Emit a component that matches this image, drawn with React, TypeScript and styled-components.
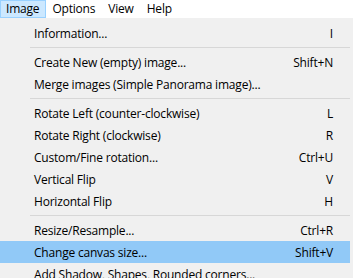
import styled, { createGlobalStyle } from "styled-components";

const GlobalStyle = createGlobalStyle`
  html, body {
    margin: 0;
    padding: 0;
    overflow: hidden;
    background: #f0f0f0;
    font-family: 'Open Sans', 'Noto Sans', 'Liberation Sans', sans-serif;
    font-size: 12px;
    letter-spacing: -0.2px;
    color: #000;
  }
`;

const Window = styled.div`
  width: 353px;
  height: 278px;
  display: flex;
  flex-direction: column;
  overflow: hidden;
`;

const MenuBar = styled.div`
  display: flex;
  height: 18px;
  background: #fff;
  flex-shrink: 0;
`;

const MenuBarItem = styled.div<{ active?: boolean }>`
  display: flex;
  align-items: center;
  padding: 0 6px 0 5px;
  box-sizing: border-box;
  height: 18px;
  background: ${({ active }) => (active ? "#cce8ff" : "transparent")};
  border: 1px solid ${({ active }) => (active ? "#99d1ff" : "transparent")};
  line-height: 16px;
`;

const Popup = styled.div`
  display: flex;
  flex-direction: column;
  padding: 4px 3px 0 0;
  background: #f0f0f0;
`;

const Item = styled.div<{ selected?: boolean }>`
  display: flex;
  align-items: center;
  justify-content: space-between;
  height: 22px;
  flex-shrink: 0;
  padding: 0 17px 0 34px;
  background: ${({ selected }) => (selected ? "#91c9f7" : "transparent")};
  white-space: nowrap;
`;

const Shortcut = styled.span`
  margin-left: 24px;
`;

const Separator = styled.div`
  height: 7px;
  flex-shrink: 0;
  margin-left: 30px;
  display: flex;
  align-items: center;
  &::after {
    content: "";
    flex: 1;
    height: 1px;
    background: #d7d7d7;
  }
`;

type Entry = { label: string; key?: string; selected?: boolean } | "sep";

const entries: Entry[] = [
  { label: "Information...", key: "I" },
  "sep",
  { label: "Create New (empty) image...", key: "Shift+N" },
  { label: "Merge images (Simple Panorama image)..." },
  "sep",
  { label: "Rotate Left (counter-clockwise)", key: "L" },
  { label: "Rotate Right (clockwise)", key: "R" },
  { label: "Custom/Fine rotation...", key: "Ctrl+U" },
  { label: "Vertical Flip", key: "V" },
  { label: "Horizontal Flip", key: "H" },
  "sep",
  { label: "Resize/Resample...", key: "Ctrl+R" },
  { label: "Change canvas size...", key: "Shift+V", selected: true },
  { label: "Add Shadow, Shapes, Rounded corners..." },
];

export default function App() {
  return (
    <Window>
      <GlobalStyle />
      <MenuBar>
        <MenuBarItem active>Image</MenuBarItem>
        <MenuBarItem>Options</MenuBarItem>
        <MenuBarItem>View</MenuBarItem>
        <MenuBarItem>Help</MenuBarItem>
      </MenuBar>
      <Popup>
        {entries.map((e, i) =>
          e === "sep" ? (
            <Separator key={i} />
          ) : (
            <Item key={i} selected={e.selected}>
              <span>{e.label}</span>
              {e.key && <Shortcut>{e.key}</Shortcut>}
            </Item>
          )
        )}
      </Popup>
    </Window>
  );
}
